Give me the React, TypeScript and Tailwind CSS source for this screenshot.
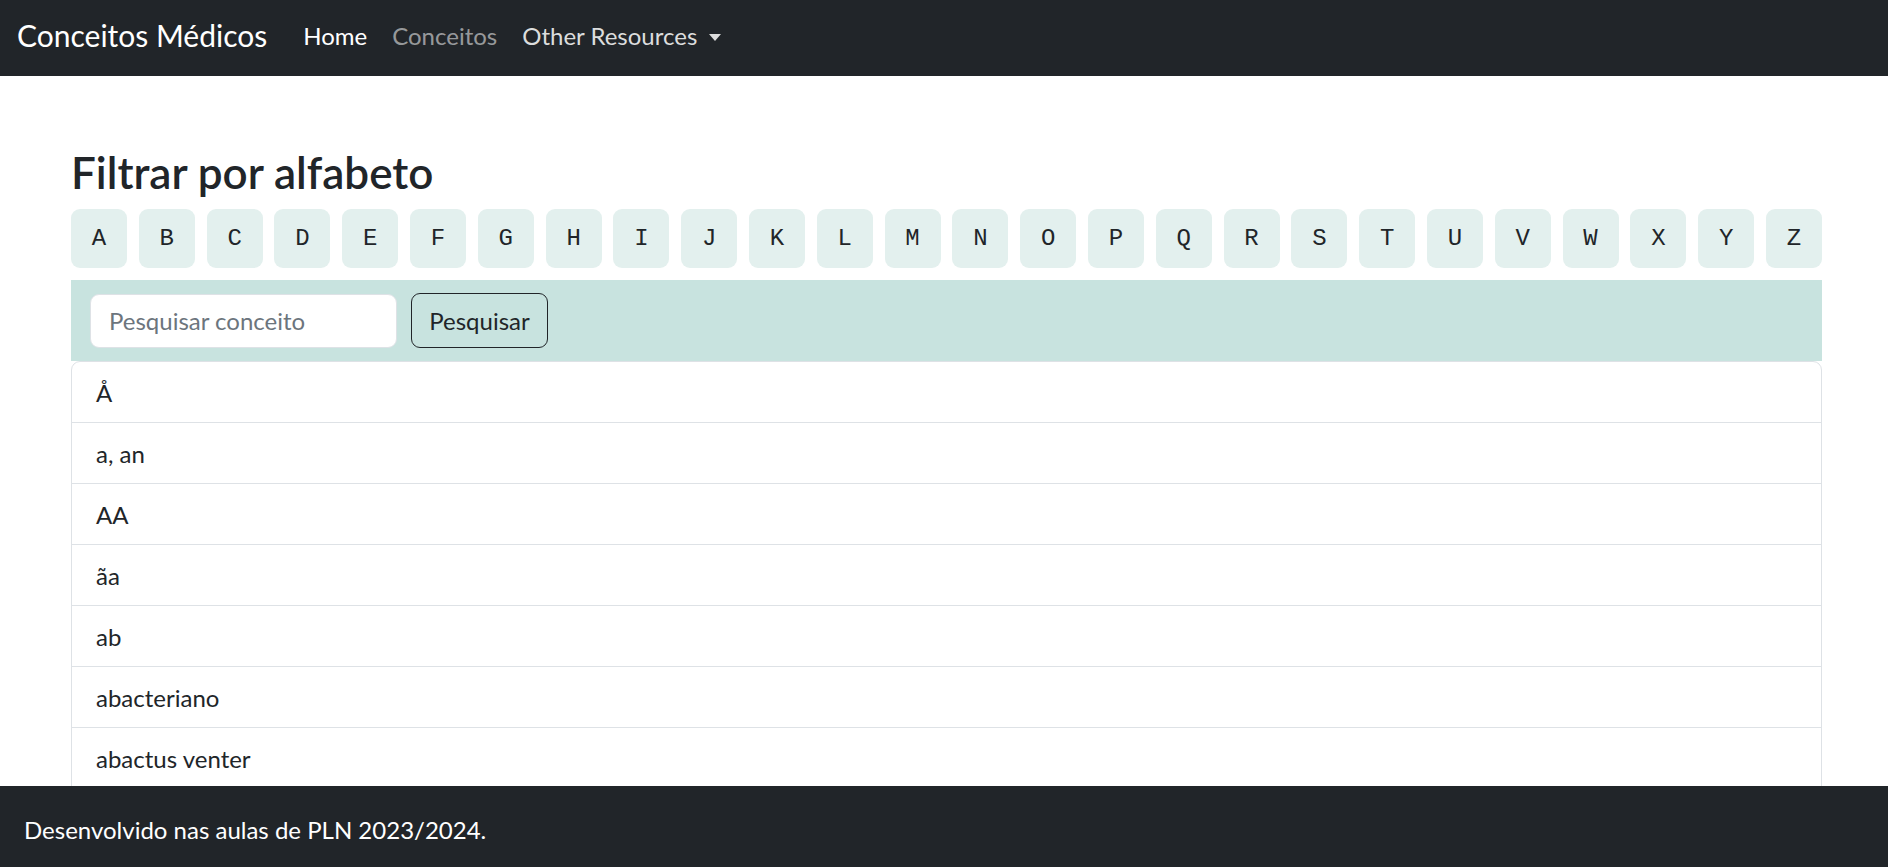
const letters = 'ABCDEFGHIJKLMNOPQRSTUVWXYZ'.split('');

const concepts = ['Å', 'a, an', 'AA', 'ãa', 'ab', 'abacteriano', 'abactus venter'];

const sans = "font-['Lato','Noto_Sans',sans-serif]";

function Navbar() {
  return (
    <nav className="flex h-[76px] items-center bg-[#212529] pb-[5px] pl-[17px]">
      <a className="text-[30px] leading-[45px] text-white">Conceitos Médicos</a>
      <ul className="ml-[36px] flex items-center gap-[25px] text-[24px] leading-[36px]">
        <li className="text-white">Home</li>
        <li className="text-[rgba(255,255,255,0.55)]">Conceitos</li>
        <li className="flex items-center gap-[12px] text-[#dcdddd]">
          Other Resources
          <span className="mt-[3px] h-0 w-0 border-x-[6.5px] border-t-[7.5px] border-x-transparent border-t-[#dcdddd]" />
        </li>
      </ul>
    </nav>
  );
}

function LetterBar() {
  return (
    <div className="flex justify-between">
      {letters.map(l => (
        <button
          key={l}
          className="flex h-[59px] w-[56px] items-center justify-center rounded-[9px] bg-[#e3f0ee] font-['Liberation_Mono','Courier_New',monospace] text-[24px] text-[#212529]"
        >
          {l}
        </button>
      ))}
    </div>
  );
}

function SearchBar() {
  return (
    <div className="mt-[12px] flex h-[81px] items-center gap-[14px] bg-[#c8e3df] px-[19px]">
      <input
        className="h-[54px] w-[307px] rounded-[9px] border border-[#dee2e6] bg-white px-[18px] text-[24px] text-[#212529] outline-none placeholder:text-[#6c757d]"
        placeholder="Pesquisar conceito"
      />
      <button className="h-[55px] w-[137px] rounded-[9px] border-[1.5px] border-[#212529] text-[24px] text-[#212529]">Pesquisar</button>
    </div>
  );
}

function ConceptList() {
  return (
    <ul className="rounded-t-[9px] border border-[#dee2e6]">
      {concepts.map((c, i) => (
        <li key={c} className={`px-[24px] pb-[11px] pt-[13px] text-[24px] leading-[36px] text-[#212529] ${i > 0 ? 'border-t border-[#dee2e6]' : ''}`}>
          {c}
        </li>
      ))}
    </ul>
  );
}

export default function App() {
  return (
    <div className={`${sans} min-h-screen bg-white`}>
      <Navbar />
      <main className="pl-[71px] pr-[66px] pt-[70px]">
        <h2 className="mb-[10px] text-[44px] font-semibold leading-[53px] text-[#212529]">Filtrar por alfabeto</h2>
        <LetterBar />
        <SearchBar />
        <ConceptList />
      </main>
      <footer className="fixed inset-x-0 bottom-0 h-[81px] bg-[#212529] pl-[24px] pt-[26px] text-[24px] leading-[36px] text-white">
        Desenvolvido nas aulas de PLN 2023/2024.
      </footer>
    </div>
  );
}
